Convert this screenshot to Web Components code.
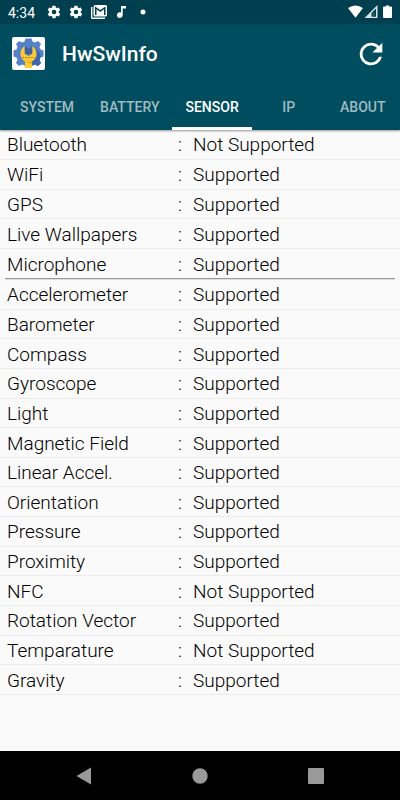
<!DOCTYPE html>
<html lang="en">
<head>
<meta charset="utf-8">
<meta name="viewport" content="width=device-width, initial-scale=1">
<title>HwSwInfo</title>
<style>
  html, body { height: 100%; margin: 0; }
  body { font-family: Roboto, "Noto Sans", sans-serif; background: #fafafa; }
</style>
</head>
<body>
<hw-app></hw-app>

<template id="status-bar">
  <style>
    :host { display: flex; align-items: center; justify-content: space-between; height: 24px; padding: 0 7px 0 8px; background: #003f4f; color: #fff; font-size: 14px; line-height: 24px; }
    div { display: flex; align-items: center; }
    .left { gap: 8px; }
    time { margin-right: 4px; padding-top: 2px; line-height: 22px; }
    svg { display: block; fill: currentColor; }
  </style>
  <div class="left">
    <time>4:34</time>
    <svg width="14" height="14" viewBox="1 1 22 22"><path fill-rule="evenodd" d="M19.4 13c0-.3.1-.6.1-1s0-.7-.1-1l2.1-1.600c.2-.2.3-.4.1-.7l-2-3.400c-.1-.2-.4-.3-.6-.2l-2.500 1c-.5-.4-1.100-.7-1.700-1l-.4-2.600c0-.2-.2-.4-.5-.4h-4c-.2 0-.4.2-.5.4l-.4 2.600c-.6.3-1.100.6-1.700 1l-2.500-1c-.2-.1-.5 0-.6.2l-2 3.400c-.1.2-.1.5.1.7L4.500 11c0 .3-.1.7-.1 1s0 .7.1 1l-2.100 1.600c-.2.2-.3.4-.1.7l2 3.400c.1.2.4.3.6.2l2.500-1c.5.4 1.100.7 1.700 1l.4 2.600c0 .2.2.4.5.4h4c.2 0 .5-.2.5-.4l.4-2.600c.6-.3 1.200-.6 1.700-1l2.500 1c.2.1.5 0 .6-.2l2-3.400c.1-.2.1-.5-.1-.7zM12 15.600a3.600 3.600 0 1 1 0-7.200 3.600 3.600 0 0 1 0 7.200z"/></svg>
    <svg width="14" height="14" viewBox="1 1 22 22"><path fill-rule="evenodd" d="M19.4 13c0-.3.1-.6.1-1s0-.7-.1-1l2.1-1.600c.2-.2.3-.4.1-.7l-2-3.400c-.1-.2-.4-.3-.6-.2l-2.500 1c-.5-.4-1.100-.7-1.700-1l-.4-2.600c0-.2-.2-.4-.5-.4h-4c-.2 0-.4.2-.5.4l-.4 2.600c-.6.3-1.100.6-1.700 1l-2.500-1c-.2-.1-.5 0-.6.2l-2 3.400c-.1.2-.1.5.1.7L4.500 11c0 .3-.1.7-.1 1s0 .7.1 1l-2.100 1.600c-.2.2-.3.4-.1.7l2 3.400c.1.2.4.3.6.2l2.500-1c.5.4 1.100.7 1.700 1l.4 2.600c0 .2.2.4.5.4h4c.2 0 .5-.2.5-.4l.4-2.600c.6-.3 1.200-.6 1.700-1l2.500 1c.2.1.5 0 .6-.2l2-3.400c.1-.2.1-.5-.1-.7zM12 15.600a3.600 3.600 0 1 1 0-7.200 3.600 3.600 0 0 1 0 7.200z"/></svg>
    <svg width="16" height="14" viewBox="0 0 16 14"><path d="M0 2h1.400v10.600H14V14H1.500Q0 14 0 12.500z"/><path fill-rule="evenodd" d="M4 0h10.500Q16 0 16 1.500v8.500q0 1.500-1.500 1.500H4q-1.500 0-1.500-1.500V1.500Q2.500 0 4 0zM4 1.600V10h1.500V4.200l3.800 2.700L13 4.200V10h1.500V1.600L9.300 5z"/></svg>
    <svg width="14" height="14" viewBox="0 0 14 14"><path d="M6 1h5v2.600H7.700V10a2.900 2.900 0 1 1-1.700-2.600z"/></svg>
    <svg width="15" height="6" viewBox="0 0 15 6"><circle cx="6" cy="3" r="2.500"/></svg>
  </div>
  <div>
    <svg width="45" height="14" viewBox="0 0 45 14"><path d="M0 3Q7.500-2 15 3L7.500 12.700z"/><path fill-rule="evenodd" d="M29.500 0v13H16.500zM28 3.500 23.500 8v3.700H28z" opacity=".85"/><path d="M25 7.200h1.400v4H25z" opacity=".2"/><path d="M38 .5h3v1h2q1 0 1 1V12q0 1-1 1h-7q-1 0-1-1V2.500q0-1 1-1h2z"/></svg>
  </div>
</template>

<template id="app-bar">
  <style>
    :host { display: flex; align-items: center; height: 59px; padding: 0 12px; background: #004d60; color: #fff; }
    h1 { flex: 1; margin: 0 0 0 17px; font-size: 21px; line-height: 28px; font-weight: 500; }
    button { width: 34px; height: 34px; padding: 0; border: 0; background: none; color: inherit; }
    svg { display: block; }
  </style>
  <svg width="33" height="33" viewBox="0 0 33 33" aria-hidden="true">
    <rect width="33" height="33" rx="2" fill="#fff"/>
    <path fill="#5680c8" d="M13.500 1.500h6l1 3 2.500 1L26 4 29 7l-1.500 3 1 2.500 3 1v6l-3 1-1 2.500 1.500 3L26 29l-3-1.500-2.500 1-1 2.500h-6l-1-2.500-2.500-1L7 29l-3-3 1.500-3-1-2.500-3-1v-6l3-1 1-2.500L4 7l3-3 3 1.500 2.500-1z"/>
    <path fill="#3f65a8" d="m22 10 6.500 6.500V20l-1 3 1.500 3-3 3-3-1.500-3 1z"/>
    <path fill="#41609c" d="M13 9v8.500h7V9l-3 3z"/>
    <path fill="#fcca32" d="M12.500 9Q8.500 12 8.500 17q0 5 4.500 7.500V31h7v-6.500q4.500-2.500 4.500-7.500 0-5-4-8v7.500l-4 2.500-4-2.500z"/>
    <path fill="#e6a427" d="M13 24.500h7V27z"/>
    <path d="M10 20.500h13" stroke="#a98532" stroke-dasharray="2 1"/>
  </svg>
  <h1><slot></slot></h1>
  <button type="button" aria-label="Refresh"><svg width="34" height="34" viewBox="0 0 24 24" fill="currentColor"><path d="M17.650 6.350A7.960 7.960 0 0 0 12 4a8 8 0 1 0 7.730 10h-2.080A6 6 0 1 1 12 6c1.660 0 3.140.69 4.220 1.780L13 11h7V4z"/></svg></button>
</template>

<template id="tab-bar">
  <style>
    :host { display: flex; height: 47px; padding-left: 7px; background: #004d60; box-shadow: 0 1px 2px #0006; position: relative; }
  </style>
  <slot></slot>
</template>

<template id="tab-item">
  <style>
    :host { display: flex; flex: 0 0 auto; min-width: 74px; }
    button { flex: 1; padding: 0 13px; border: 0; border-bottom: 3px solid transparent; border-top: 3px solid transparent; background: none; color: #a0bbc2; font: 500 14px/20px Roboto, sans-serif; text-transform: uppercase; }
    :host([selected]) button { color: #fff; border-bottom-color: #fff; }
  </style>
  <button type="button"><slot></slot></button>
</template>

<template id="feature-table">
  <style>
    :host { display: block; }
    table { width: 100%; height: var(--table-height); border-collapse: separate; border-spacing: 0; table-layout: fixed; font-size: 19px; line-height: 26px; color: #000; }
    col.name { width: 178px; } col.colon { width: 15px; }
    th, td { padding: 2px 0 0; border-bottom: 1px solid #ebebeb; font-weight: 300; text-align: left; white-space: nowrap; }
    th { padding-left: 7px; }
    :host([divided]) tr:last-child > * { border-bottom: 0; }
  </style>
  <table><colgroup><col class="name"><col class="colon"><col></colgroup><tbody></tbody></table>
</template>

<template id="nav-bar">
  <style>
    :host { display: flex; justify-content: space-around; align-items: center; height: 49px; padding: 0 26px; background: #000; }
    button { width: 48px; height: 48px; padding: 0; border: 0; background: none; display: grid; place-items: center; }
    svg { fill: #999; }
  </style>
  <button type="button" aria-label="Back"><svg width="16" height="18"><path d="M15 .5v17L.5 9z"/></svg></button>
  <button type="button" aria-label="Home"><svg width="16" height="16"><circle cx="8" cy="8" r="7.700"/></svg></button>
  <button type="button" aria-label="Recent apps"><svg width="16" height="16"><rect width="16" height="16" rx="1"/></svg></button>
</template>

<template id="hw-app">
  <style>
    :host { display: flex; flex-direction: column; min-height: 100vh; }
    main { flex: 1; }
    .general { --table-height: 148px; }
    .sensors { --table-height: 415px; }
    hr { height: 1px; margin: 0 5px; border: 0; background: #999; border-bottom: 1px solid #ddd; }
  </style>
  <status-bar></status-bar>
  <app-bar>HwSwInfo</app-bar>
  <tab-bar>
    <tab-item>System</tab-item><tab-item>Battery</tab-item><tab-item selected>Sensor</tab-item><tab-item>IP</tab-item><tab-item>About</tab-item>
  </tab-bar>
  <main>
    <feature-table class="general" divided names="Bluetooth,WiFi,GPS,Live Wallpapers,Microphone" missing="Bluetooth"></feature-table>
    <hr>
    <feature-table class="sensors" names="Accelerometer,Barometer,Compass,Gyroscope,Light,Magnetic Field,Linear Accel.,Orientation,Pressure,Proximity,NFC,Rotation Vector,Temparature,Gravity" missing="NFC,Temparature"></feature-table>
  </main>
  <nav-bar></nav-bar>
</template>

<script>
  class Templated extends HTMLElement {
    constructor() {
      super();
      this.attachShadow({ mode: 'open' }).append(document.getElementById(this.localName).content.cloneNode(true));
    }
  }
  class FeatureTable extends Templated {
    connectedCallback() {
      const missing = this.getAttribute('missing').split(',');
      const body = this.shadowRoot.querySelector('tbody');
      body.replaceChildren();
      for (const name of this.getAttribute('names').split(',')) {
        const row = body.insertRow();
        const head = document.createElement('th');
        head.scope = 'row';
        head.textContent = name;
        row.append(head);
        row.insertCell().textContent = ':';
        row.insertCell().textContent = missing.includes(name) ? 'Not Supported' : 'Supported';
      }
    }
  }
  customElements.define('status-bar', class extends Templated {});
  customElements.define('app-bar', class extends Templated {});
  customElements.define('tab-item', class extends Templated {});
  customElements.define('tab-bar', class extends Templated {});
  customElements.define('feature-table', FeatureTable);
  customElements.define('nav-bar', class extends Templated {});
  customElements.define('hw-app', class extends Templated {});
</script>
</body>
</html>
